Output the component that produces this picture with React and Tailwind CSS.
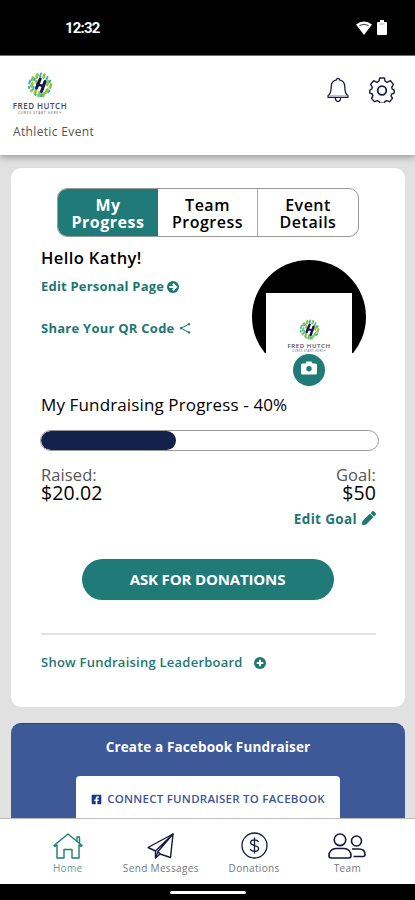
import React from 'react';
import {
  FaFacebookSquare,
  FaPen
} from 'react-icons/fa';

const LogoMark = ({ className }) => (

  <svg viewBox="0 0 26 26" className={className} fill="none" strokeLinecap="round">

    <g stroke="#8cc63f" strokeWidth="2.8">
      <path d="M10.500 2.500 9.500 5.500M17.500 2.600 16.500 5.500M6 5.500 5.200 8M5.500 11.500 4.500 14.500M21.500 9 20 13M24 12.500 23 15.500M20.500 17.500 19 20.500M9 18 7.800 21.500M12.500 20.500 11.500 24M17 21.500 16 24M9.500 9 9 10.500M4.500 18.500 4.400 19" />
    </g>

    <g stroke="#35b0c4" strokeWidth="2">
      <path d="M14 1.500 13 4.500M20.500 5 19.500 7.500M3.200 8.500 2.200 11.500M2 14.500 2.200 16M6.800 15 6 17.500M23.300 8.700 22.800 10M22.500 18.500 21.500 20M14.500 22 14 24.500M8.500 23 8.700 22.500M7.800 6.500 7.300 8" />
    </g>

    <g stroke="#17164c" strokeWidth="3">
      <path d="M13.200 7 9.500 16M18 9.500 14.500 19.500" />
      <path d="m10.500 12.500 6 1.500" strokeWidth="2.400" />
    </g>

  </svg>

);

const BellIcon = () => (

  <svg viewBox="0 0 22 26" className="h-[26px] w-[22px]" fill="none" stroke="#1b1b45" strokeWidth="1.3" strokeLinejoin="round">
    <path d="M9.500 2.800a1.500 1.500 0 0 1 3 0c3.600.8 5.300 3.400 5.300 7 0 4.500.6 7.300 3.200 9v1.500H1v-1.500c2.600-1.700 3.200-4.500 3.200-9 0-3.600 1.700-6.200 5.300-7z" />
    <path d="M1.500 18.800h19" stroke="#8b8ba5" strokeWidth=".8" />
    <path d="M8.300 20.500c.2 2.600 1 4 2.700 4s2.500-1.400 2.700-4" />
  </svg>

);

const GearIcon = () => (

  <svg viewBox="0 0 26 26" className="size-[26px]" fill="none" stroke="#1b1b45" strokeWidth="1.4" strokeLinejoin="round">
    <path d="M10.700 1h4.600l.8 3.200 2 1.100 3.300-1.600 3 3.700-1.700 2.900.5 1.700 2 1.100v3l-2.500.9-.6 1.800 1.400 2.600-3 3.300-3-1.100-1.700 1-.5 1.500h-4.600l-.6-1.600-1.700-.9-2.900 1.100-3-3.300 1.400-2.600-.6-1.800-2.500-.9v-3l2-1.100.5-1.700-1.700-2.900 3-3.700 3.300 1.600 2-1.100z" />
    <circle cx="13" cy="13.500" r="4.300" strokeWidth="1.800" />
  </svg>

);

const ArrowCircleIcon = () => (

  <svg viewBox="0 0 12 12" className="size-3">
    <circle cx="6" cy="6" r="6" fill="#1d7773" />
    <path d="M2.300 6h6M5.800 2.800 9 6 5.800 9.200" fill="none" stroke="#fff" strokeWidth="2" />
  </svg>

);

const PlusCircleIcon = () => (

  <svg viewBox="0 0 12 12" className="size-3">
    <circle cx="6" cy="6" r="6" fill="#1d7773" />
    <path d="M6 2.700v6.600M2.700 6h6.600" stroke="#fff" strokeWidth="2" />
  </svg>

);

const CameraIcon = () => (

  <svg viewBox="0 0 16 14" className="mb-1 h-3.5 w-4">
    <path d="M1.500 2.500H4.500L5.500.5h5l1 2h3q1.500 0 1.500 1.500v8q0 1.500-1.500 1.500h-13Q0 13.500 0 12V4q0-1.500 1.500-1.500z" fill="#fff" />
    <circle cx="8" cy="7.700" r="2.700" fill="#1f7a78" />
  </svg>

);

const ShareIcon = () => (

  <svg viewBox="0 0 12 13" className="mb-0.5 h-[13px] w-3" fill="#1d7773" stroke="#1d7773">
    <path d="M10 2.200 2 6.200l8 4.300" fill="none" strokeWidth="1" />
    <circle cx="10" cy="2.200" r=".8" />
    <circle cx="2" cy="6.200" r=".8" />
    <circle cx="10" cy="10.500" r=".8" />
  </svg>

);

const HomeIcon = () => (

  <svg viewBox="0 0 30 26" className="h-[26px] w-[30px]" fill="none" stroke="#1d7f70" strokeWidth="1.400" strokeLinejoin="round">
    <path d="m1 12.500 14-11.500 14 11.500-1 1-2-1.500v13h-7v-8.500h-8V25H4V12l-2 1.500z" />
    <path d="M24 8V4h2.500v6.500" />
  </svg>

);

const SendIcon = () => (

  <svg viewBox="0 0 27 26" className="h-[26px] w-[27px]" fill="none" stroke="#17173d" strokeWidth="1.400" strokeLinejoin="round">
    <path d="M26 1 1 14.500l7.500 3.500V25l4.500-4 10.500 3.500z" />
    <path d="M8.500 18 26 1 11 18.500l2 2.500M8.500 25l2.500-6.500" />
  </svg>

);

const DollarIcon = () => (

  <svg viewBox="0 0 27 27" className="size-[27px]" fill="none" stroke="#17173d" strokeWidth="1.300">
    <circle cx="13.500" cy="13.500" r="12.500" />
    <path d="M17.500 9.800c-.8-1.300-2.200-1.900-4-1.900-2.300 0-3.900 1-3.900 2.700 0 4 8 1.900 8 5.900 0 1.800-1.700 2.900-4.100 2.900-2 0-3.500-.8-4.200-2.300M13.500 5.500v16" />
  </svg>

);

const TeamIcon = () => (

  <svg viewBox="0 0 38 26" className="h-[26px] w-[38px]" fill="none" stroke="#17173d" strokeWidth="1.600">
    <circle cx="12" cy="6.800" r="5.800" />
    <circle cx="28.500" cy="8" r="5" />
    <path d="M8 15.500h8c4 0 7 3 7 7 0 1.500-.7 2.500-2.200 2.500H3.200C1.700 25 1 24 1 22.500c0-4 3-7 7-7z" />
    <path d="M24 16h7c4 0 6 2.500 6 5.500 0 1.200-.5 2-1.800 2H25.500" />
  </svg>

);

const navItems = [
  { label: 'Home', icon: HomeIcon, style: 'text-[#5f9e94] tracking-[0.3px]' },
  { label: 'Send Messages', icon: SendIcon, style: 'text-[#77777b] tracking-[0.35px]' },
  { label: 'Donations', icon: DollarIcon, style: 'text-[#77777b] tracking-[0.35px]' },
  { label: 'Team', icon: TeamIcon, style: 'text-[#77777b] tracking-[0.3px]' }
];

const App = () => {

  const progress = 40;

  return (

    <div className="flex h-[900px] w-[415px] flex-col overflow-hidden bg-[#e1e1e1] font-['Open_Sans',sans-serif] text-black">

      <div className="flex h-14 shrink-0 items-center justify-between border-b border-[#777] bg-black pl-[65px] pr-7">

        <span className="mt-0.5 font-[Roboto,sans-serif] text-[15px] font-bold leading-none tracking-[-0.8px] text-white">
          12:32
        </span>

        <div className="flex items-center gap-[5px]">

          <svg viewBox="0 0 16 14" className="h-3.5 w-4" fill="#fff">
            <path d="M0 3.500Q8-2.500 16 3.500L8 14z" />
            <path d="M3.500 4.500q4.500-2.500 9 0" fill="none" stroke="#000" strokeWidth=".8" />
          </svg>

          <svg viewBox="0 0 10 15" className="h-[15px] w-2.5" fill="#fff">
            <path d="M3 0h4v2h2q1 0 1 1v11q0 1-1 1H1q-1 0-1-1V3q0-1 1-1h2z" />
            <path d="M2.500 4h5" stroke="#777" strokeWidth=".6" />
          </svg>

        </div>

      </div>

      <header className="z-10 flex h-[99px] shrink-0 justify-between bg-white pl-[13px] pr-5 shadow-[0_2px_7px_rgba(0,0,0,0.35)]">

        <div className="flex flex-col items-start pt-4">

          <div className="flex w-[54px] flex-col items-center">

            <LogoMark className="size-[26px]" />

            <span className="mt-1 whitespace-nowrap text-[8px] font-semibold leading-[8px] tracking-[0.5px] text-[#49495d]">
              FRED HUTCH
            </span>

            <span className="mt-px whitespace-nowrap text-[3.500px] leading-[4px] tracking-[0.6px] text-[#55556a]">
              CURES START HERE™
            </span>

          </div>

          <p className="mt-[9px] text-[12px] leading-4 tracking-[0.35px] text-[#555]">
            Athletic Event
          </p>

        </div>

        <div className="flex items-start gap-5 pt-[21px]">
          <BellIcon />
          <GearIcon />
        </div>

      </header>

      <main className="flex min-h-0 flex-1 flex-col gap-4 overflow-hidden pl-[11px] pr-2.5 pt-[13px]">

        <section className="flex h-[539px] shrink-0 flex-col rounded-[10px] bg-white pl-[30px] pr-[29px] pt-5">

          <div className="ml-4 grid h-[49px] w-[302px] shrink-0 grid-cols-3 overflow-hidden rounded-[10px] border border-[#999] text-center text-[16px] font-bold leading-[17px] tracking-[0.5px]">

            <button className="bg-[#1f7a78] pt-0.5 text-white">
              My<br />Progress
            </button>

            <button className="border-r border-[#aaa] pt-0.5 font-semibold">
              Team<br />Progress
            </button>

            <button className="pt-0.5 font-semibold">
              Event<br />Details
            </button>

          </div>

          <div className="flex h-[149px] shrink-0 justify-between pr-2.5">

            <div className="whitespace-nowrap font-semibold">

              <h1 className="mt-[9px] text-[16.500px] leading-6 tracking-[0.4px]">
                Hello Kathy!
              </h1>

              <a className="mt-[7px] flex h-5 items-center gap-[3px] text-[13px] font-bold tracking-[0.2px] text-[#1d7773]">
                Edit Personal Page
                <ArrowCircleIcon />
              </a>

              <a className="mt-[22px] flex h-5 items-center gap-1 text-[13px] font-bold tracking-[0.25px] text-[#1d7773]">
                Share Your QR Code
                <ShareIcon />
              </a>

            </div>

            <div className="mt-[23px] flex w-[114px] flex-col items-center">

              <div className="h-[93px] w-[114px] overflow-hidden">

                <div className="flex size-[114px] flex-col items-center rounded-full bg-black pt-[33px]">

                  <div className="flex h-[81px] w-[86px] flex-col items-center bg-white pt-[26px]">

                    <LogoMark className="size-[21px]" />

                    <span className="mt-[3px] whitespace-nowrap text-[6px] font-semibold leading-[6px] tracking-[0.6px] text-[#49495d]">
                      FRED HUTCH
                    </span>

                    <span className="mt-px whitespace-nowrap text-[2.800px] leading-[3px] tracking-[0.4px] text-[#55556a]">
                      CURES START HERE™
                    </span>

                  </div>

                </div>

              </div>

              <button className="mt-px flex size-8 shrink-0 items-center justify-center rounded-full bg-[#1f7a78]">
                <CameraIcon />
              </button>

            </div>

          </div>

          <h2 className="mt-[7px] h-6 shrink-0 whitespace-nowrap text-[17px] leading-6 tracking-[0.13px]">
            My Fundraising Progress - 40%
          </h2>

          <div className="-ml-px mt-[13px] flex h-[21px] w-[339px] shrink-0 overflow-hidden rounded-full border border-[#999] bg-white">
            <div className="rounded-full bg-[#13214a]" style={{ width: `${progress}%` }} />
          </div>

          <div className="mt-[15px] flex justify-between whitespace-nowrap">

            <div>

              <p className="text-[16.500px] leading-[18px] tracking-[0.1px] text-[#555]">
                Raised:
              </p>

              <p className="text-[19.500px] font-medium leading-[18px] tracking-[0.1px]">
                $20.02
              </p>

            </div>

            <div className="flex flex-col items-end">

              <p className="text-[16.500px] leading-[18px] tracking-[0.1px] text-[#555]">
                Goal:
              </p>

              <p className="text-[19.500px] font-medium leading-[18px] tracking-[0.1px]">
                $50
              </p>

              <a className="mt-[7px] flex h-5 items-center gap-[5px] text-[13.500px] font-bold tracking-[0.35px] text-[#1d7773]">
                Edit Goal
                <FaPen className="mb-0.5 size-3.5" />
              </a>

            </div>

          </div>

          <button className="mr-0.5 mt-[30px] h-[41px] w-[252px] shrink-0 self-center rounded-full bg-[#1f7a78] text-[15px] font-bold tracking-[-0.15px] text-white">
            ASK FOR DONATIONS
          </button>

          <div className="mt-[33px] h-0.5 shrink-0 bg-[#e2e2e2]" />

          <a className="mt-[18px] flex h-5 items-center gap-[11px] whitespace-nowrap text-[13px] font-semibold tracking-[0.24px] text-[#1d7773]">
            Show Fundraising Leaderboard
            <PlusCircleIcon />
          </a>

        </section>

        <section className="flex h-[150px] shrink-0 flex-col items-center rounded-t-[10px] border-t border-[#17488b] bg-[#3e5998]">

          <h2 className="mt-[13px] whitespace-nowrap text-[13.500px] font-bold leading-5 tracking-[0.15px] text-white">
            Create a Facebook Fundraiser
          </h2>

          <button className="mt-[19px] flex h-[60px] w-[264px] items-start justify-center gap-[5px] whitespace-nowrap rounded bg-white pt-[13px] text-[11.500px] font-semibold leading-5 tracking-[0.25px] text-[#3b5498]">
            <FaFacebookSquare className="mt-[5px] size-[11px] text-[#17398b]" />
            CONNECT FUNDRAISER TO FACEBOOK
          </button>

        </section>

      </main>

      <nav className="z-10 grid h-[66px] shrink-0 grid-cols-4 border-t border-[#bbb] bg-white px-[21px] pt-[13px]">

        {navItems.map((item) => (

          <a key={item.label} className="flex flex-col items-center">

            <span className="flex h-[27px] items-center">
              <item.icon />
            </span>

            <span className={`mt-0.5 whitespace-nowrap text-[10px] leading-[14px] ${item.style}`}>
              {item.label}
            </span>

          </a>

        ))}

      </nav>

      <div className="flex h-4 shrink-0 justify-center bg-black pt-[7px]">
        <div className="h-[3px] w-[76px] rounded-full bg-white" />
      </div>

    </div>

  );

};

export default App;
